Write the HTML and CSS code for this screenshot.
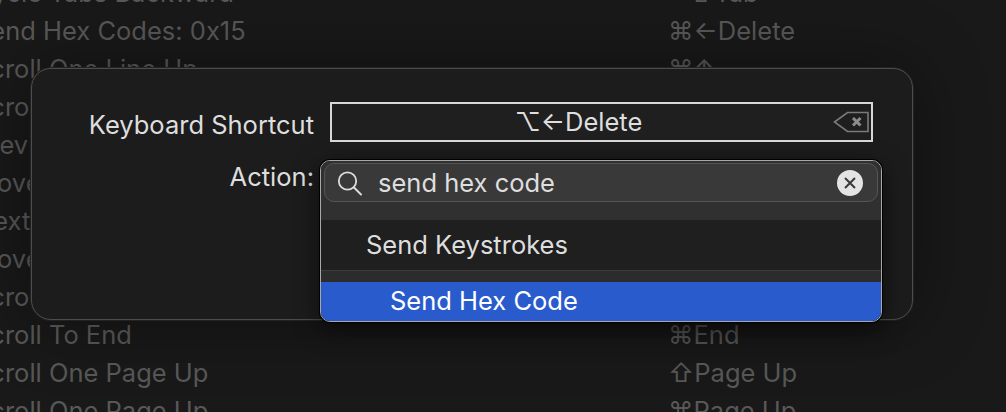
FILE: index.html
```html
<!DOCTYPE html>
<html lang="en">

<head>
  <meta charset="UTF-8" />
  <title>Keyboard Shortcut</title>
  <link rel="stylesheet" href="styles.css">
</head>

<body>
  <div id="keys">
    <div class="key-row"><span>Cycle Tabs Backward</span><span>⌃⇧Tab</span></div>
    <div class="key-row"><span>Send Hex Codes: 0x15</span><span>⌘←Delete</span></div>
    <div class="key-row"><span>Scroll One Line Up</span><span>⌘↑</span></div>
    <div class="key-row"><span>Scroll One Line Down</span><span>⌘↓</span></div>
    <div class="key-row"><span>Previous Tab</span><span>⌘←</span></div>
    <div class="key-row"><span>Move Tab Left</span><span>⇧⌘←</span></div>
    <div class="key-row"><span>Next Tab</span><span>⌘→</span></div>
    <div class="key-row"><span>Move Tab Right</span><span>⇧⌘→</span></div>
    <div class="key-row"><span>Scroll To Top</span><span>⌘Home</span></div>
    <div class="key-row"><span>Scroll To End</span><span>⌘End</span></div>
    <div class="key-row"><span>Scroll One Page Up</span><span>⇧Page Up</span></div>
    <div class="key-row"><span>Scroll One Page Up</span><span>⌘Page Up</span></div>
  </div>

  <div class="dialog">
    <div class="field-row">
      <div class="field-label">Keyboard Shortcut</div>
      <div class="shortcut-box">
        <span class="shortcut-text">⌥←Delete</span>
        <svg class="clear-key" width="40" height="22" viewBox="0 0 40 22">
          <path d="M1.5 11 L14.5 1.5 H35 V20.5 H14.5 Z" fill="none" stroke="#7a7a7a" stroke-width="1.6" />
          <path d="M20 7 L27.5 14.5 M27.5 7 L20 14.5" fill="none" stroke="#8c8c8c" stroke-width="3" />
        </svg>
      </div>
    </div>
    <div class="field-row action-row">
      <div class="field-label">Action:</div>
    </div>
  </div>

  <div class="menu">
    <div class="menu-top">
      <div class="search">
        <svg class="search-icon" width="28" height="28" viewBox="0 0 28 28">
          <circle cx="11.5" cy="11" r="8.7" fill="none" stroke="#dcdcdc" stroke-width="1.8" />
          <path d="M18 17.5 L25 24.5" fill="none" stroke="#dcdcdc" stroke-width="2" stroke-linecap="round" />
        </svg>
        <span class="search-text">send hex code</span>
        <svg width="26" height="26" viewBox="0 0 26 26">
          <circle cx="13" cy="13" r="13" fill="#e4e4e4" />
          <path d="M8 8 L18 18 M18 8 L8 18" fill="none" stroke="#3a3a3a" stroke-width="2" />
        </svg>
      </div>
    </div>
    <div class="menu-item">Send Keystrokes</div>
    <div class="menu-gap"></div>
    <div class="menu-item selected">Send Hex Code</div>
  </div>
</body>

</html>
```

FILE: styles.css
```css
body {
  font-family: Inter, 'Noto Sans', 'DejaVu Sans', sans-serif;
  background-color: #191919;
  color: #dedede;
  margin: 0;
  height: 412px;
  overflow: hidden;
}

#keys {
  margin: -27px 0 0 -26px;
  color: #585858;
  font-size: 25.5px;
}

.key-row {
  display: grid;
  grid-template-columns: 694px auto;
  align-items: center;
  height: 38px;
  white-space: nowrap;
}

.dialog {
  position: absolute;
  left: 31px;
  top: 68px;
  width: 880px;
  height: 217px;
  background: #1c1c1c;
  border: 1px solid #4c4c4c;
  border-radius: 20px;
  box-shadow: 0 0 0 1px #222, 0 0 70px rgba(0 0 0 / 0.4);
  padding-top: 33px;
}

.field-row {
  display: flex;
  align-items: center;
  gap: 16px;
  font-size: 25.5px;
}

.field-label {
  width: 282px;
  text-align: right;
  padding-top: 4px;
}

.shortcut-box {
  width: 539px;
  height: 36px;
  border: 2px solid #d8d8d8;
  background: #1f1f1f;
  display: flex;
  align-items: center;
  justify-content: center;
  position: relative;
}

.shortcut-text {
  margin-right: 46px;
  padding-bottom: 2px;
}

.clear-key {
  position: absolute;
  right: -2px;
  top: 7px;
}

.action-row {
  margin-top: 15px;
}

.menu {
  position: absolute;
  left: 320px;
  top: 160px;
  width: 560px;
  height: 160px;
  border: 1px solid #a8a8a8;
  border-radius: 10px;
  background: #1f1f1f;
  overflow: hidden;
  box-shadow: 0 0 0 1px #000, 0 6px 24px rgba(0 0 0 / 0.6);
  font-size: 25.5px;
}

.menu-top {
  height: 59px;
  background: #303030;
  padding: 2px 3px 0;
  box-sizing: border-box;
}

.search {
  height: 39px;
  box-sizing: border-box;
  background: #393939;
  border: 1px solid #555;
  border-radius: 10px;
  display: flex;
  align-items: center;
  padding: 0 14px 0 11px;
}

.search-icon {
  margin-top: 3px;
}

.search-text {
  flex: 1;
  margin-left: 14px;
}

.menu-item {
  height: 50px;
  line-height: 50px;
  padding-left: 45px;
}

.menu-gap {
  height: 12px;
  background: #2c2c2c;
  border-top: 1px solid #3c3c3c;
  box-sizing: border-box;
}

.menu-item.selected {
  height: 39px;
  line-height: 38px;
  padding-left: 69px;
  background: #2a5bcc;
  color: white;
}
```
